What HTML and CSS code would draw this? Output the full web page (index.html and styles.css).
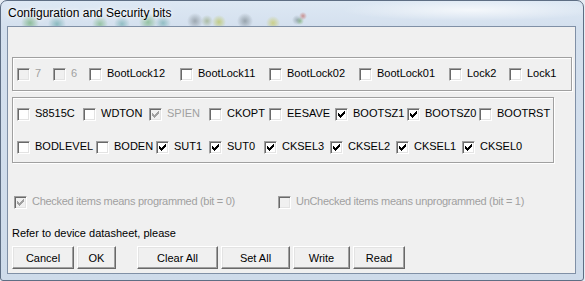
FILE: index.html
```html
<!DOCTYPE html>
<html>
<head>
<meta charset="utf-8">
<title>Configuration and Security bits</title>
<link rel="stylesheet" href="styles.css">
</head>
<body>

<svg class="defs" xmlns="http://www.w3.org/2000/svg">
	<symbol id="tick" viewBox="1 1 11 11">
		<path d="M3 5h1v1h1v1h1v-1h1v-1h1v-1h1v-1h1v3h-1v1h-1v1h-1v1h-1v1h-1v-1h-1v-1h-1z" shape-rendering="crispEdges"/>
	</symbol>
</svg>

<div class="window">
	<div class="titlebar">Configuration and Security bits</div>

	<div class="client">

		<!-- lock bits -->
		<div class="group lockbits">
			<label class="cb off"><span class="box"></span>7</label>
			<label class="cb off"><span class="box"></span>6</label>
			<label class="cb"><span class="box"></span>BootLock12</label>
			<label class="cb"><span class="box"></span>BootLock11</label>
			<label class="cb"><span class="box"></span>BootLock02</label>
			<label class="cb"><span class="box"></span>BootLock01</label>
			<label class="cb"><span class="box"></span>Lock2</label>
			<label class="cb"><span class="box"></span>Lock1</label>
		</div>

		<!-- fuse bits -->
		<div class="group fuses">
			<div class="row hi">
				<label class="cb"><span class="box"></span>S8515C</label>
				<label class="cb"><span class="box"></span>WDTON</label>
				<label class="cb off"><span class="box"><svg class="tick"><use href="#tick"/></svg></span>SPIEN</label>
				<label class="cb"><span class="box"></span>CKOPT</label>
				<label class="cb"><span class="box"></span>EESAVE</label>
				<label class="cb"><span class="box"><svg class="tick"><use href="#tick"/></svg></span>BOOTSZ1</label>
				<label class="cb"><span class="box"><svg class="tick"><use href="#tick"/></svg></span>BOOTSZ0</label>
				<label class="cb"><span class="box"></span>BOOTRST</label>
			</div>
			<div class="row lo">
				<label class="cb"><span class="box"></span>BODLEVEL</label>
				<label class="cb"><span class="box"></span>BODEN</label>
				<label class="cb"><span class="box"><svg class="tick"><use href="#tick"/></svg></span>SUT1</label>
				<label class="cb"><span class="box"><svg class="tick"><use href="#tick"/></svg></span>SUT0</label>
				<label class="cb"><span class="box"><svg class="tick"><use href="#tick"/></svg></span>CKSEL3</label>
				<label class="cb"><span class="box"><svg class="tick"><use href="#tick"/></svg></span>CKSEL2</label>
				<label class="cb"><span class="box"><svg class="tick"><use href="#tick"/></svg></span>CKSEL1</label>
				<label class="cb"><span class="box"><svg class="tick"><use href="#tick"/></svg></span>CKSEL0</label>
			</div>
		</div>

		<!-- legend -->
		<div class="legend">
			<label class="cb off"><span class="box"><svg class="tick"><use href="#tick"/></svg></span>Checked items means programmed (bit = 0)</label>
			<label class="cb off"><span class="box"></span>UnChecked items means unprogrammed (bit = 1)</label>
		</div>

		<div class="note">Refer to device datasheet, please</div>

		<div class="buttons">
			<button class="b-cancel">Cancel</button>
			<button class="b-ok">OK</button>
			<button class="b-clear">Clear All</button>
			<button class="b-set">Set All</button>
			<button class="b-write">Write</button>
			<button class="b-read">Read</button>
		</div>

	</div>
</div>

</body>
</html>
```

FILE: styles.css
```css
html, body {
	margin: 0;
}

body {
	width: 585px;
	height: 281px;
	background: #e6ecf3;
	font-family: "Liberation Sans", Arial, sans-serif;
	font-size: 11px;
	color: #000;
	overflow: hidden;
}

.defs {
	position: absolute;
	width: 0;
	height: 0;
}

/* aero frame */
.window {
	box-sizing: border-box;
	width: 584px;
	height: 281px;
	padding: 0 7px 6px 6px;
	border: 1px solid #5e6e84;
	border-radius: 7px 7px 3px 3px;
	display: flex;
	flex-direction: column;
	background:
		radial-gradient(ellipse 130px 11px at 470px 9px, rgba(255,255,255,.7), rgba(255,255,255,0)),
		linear-gradient(#dde8f4, #d4e0ee 26px, #cedbea);
}

.titlebar {
	height: 25px;
	line-height: 24px;
	padding-left: 1px;
	font-size: 12px;
	text-shadow: 0 0 6px #fff, 0 0 3px #fff;
	background:
		radial-gradient(circle 9px at 23px 22px, rgba(95,165,100,.6), rgba(95,165,100,0)),
		radial-gradient(circle 9px at 50px 23px, rgba(90,160,160,.6), rgba(90,160,160,0)),
		radial-gradient(circle 8px at 93px 23px, rgba(100,170,105,.55), rgba(100,170,105,0)),
		radial-gradient(circle 8px at 115px 23px, rgba(90,160,160,.55), rgba(90,160,160,0)),
		radial-gradient(circle 9px at 141px 21px, rgba(100,170,105,.6), rgba(100,170,105,0)),
		radial-gradient(circle 8px at 156px 22px, rgba(90,160,160,.55), rgba(90,160,160,0)),
		radial-gradient(circle 8px at 188px 20px, rgba(110,120,125,.55), rgba(110,120,125,0)),
		radial-gradient(circle 6px at 200px 20px, rgba(130,150,90,.5), rgba(130,150,90,0)),
		radial-gradient(circle 7px at 212px 21px, rgba(180,190,60,.6), rgba(180,190,60,0)),
		radial-gradient(circle 8px at 238px 20px, rgba(100,112,118,.55), rgba(100,112,118,0)),
		radial-gradient(circle 7px at 266px 22px, rgba(195,195,70,.6), rgba(195,195,70,0)),
		radial-gradient(circle 5px at 290px 19px, rgba(110,130,135,.5), rgba(110,130,135,0)),
		radial-gradient(circle 4px at 296px 15px, rgba(190,90,80,.6), rgba(190,90,80,0)),
		radial-gradient(circle 4px at 293px 20px, rgba(110,170,90,.6), rgba(110,170,90,0));
}

.client {
	flex: 1;
	display: flex;
	flex-direction: column;
	align-items: flex-start;
	border: 1px solid #8090a6;
	background: #f0f0f0;
}

/* etched group boxes */
.group {
	box-sizing: border-box;
	border: 1px solid #a0a0a0;
	box-shadow: 1px 1px 0 #fff, inset 1px 1px 0 #fff;
}

.lockbits {
	align-self: stretch;
	height: 34px;
	margin: 30px 3px 0 4px;
	padding: 10px 0 0 4px;
	display: grid;
	grid-template-columns: 36px 36px 91px 89px 90px 90px 60px auto;
}

.fuses {
	width: 542px;
	height: 66px;
	margin: 6px 0 0 4px;
	padding: 10px 0 0 4px;
	display: flex;
	flex-direction: column;
	gap: 20px;
}

.row {
	display: grid;
}
.row.hi {
	grid-template-columns: 66px 66px 60px 60px 66px 72px 72px auto;
}
.row.lo {
	grid-template-columns: 79px 60px 53px 55px 66px 66px 66px auto;
}

/* classic check boxes */
.cb {
	display: flex;
	align-items: flex-start;
	height: 13px;
	line-height: 11px;
	white-space: nowrap;
}

.box {
	box-sizing: border-box;
	flex: none;
	width: 13px;
	height: 13px;
	margin-right: 5px;
	border: 1px solid;
	border-color: #a0a0a0 #fff #fff #a0a0a0;
	box-shadow: inset 1px 1px 0 #696969, inset -1px -1px 0 #e3e3e3;
	background: #fff;
}

.tick {
	display: block;
	width: 11px;
	height: 11px;
	fill: #000;
}

.off {
	color: #a0a0a0;
}
.off .box {
	background: #f0f0f0;
}
.off .tick {
	fill: #a0a0a0;
}

.legend {
	height: 17px;
	margin: 31px 0 0 6px;
	display: grid;
	grid-template-columns: 264px auto;
	align-items: center;
	letter-spacing: -0.3px;
}

.note {
	margin: 16px 0 0 4px;
	line-height: 13px;
}

/* buttons */
.buttons {
	margin: 6px 0 0 4px;
	display: flex;
	gap: 3px;
}

button {
	box-sizing: border-box;
	height: 23px;
	padding: 0;
	font: inherit;
	color: #000;
	background: #f0f0f0;
	border: 1px solid;
	border-color: #fff #696969 #696969 #fff;
	box-shadow: inset -1px -1px 0 #a0a0a0, inset 1px 1px 0 #e3e3e3;
}

.b-cancel { width: 62px; }
.b-ok     { width: 39px; }
.b-clear  { width: 81px; margin-left: 18px; }
.b-set    { width: 69px; }
.b-write  { width: 57px; }
.b-read   { width: 52px; }
```
